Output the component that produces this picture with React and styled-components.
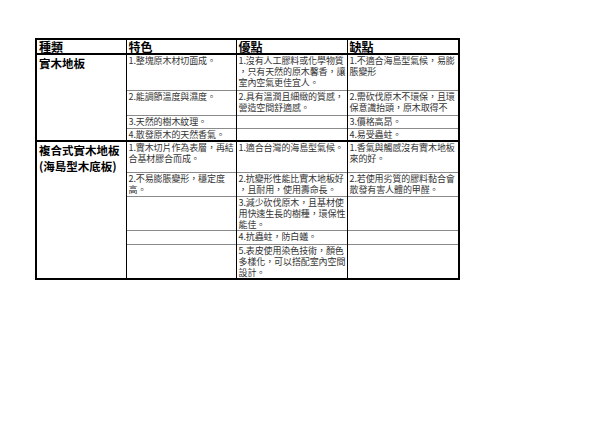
import React from 'react';
import styled, { createGlobalStyle } from 'styled-components';

const GlobalStyle = createGlobalStyle`
  html, body {
    margin: 0;
    padding: 0;
    background: #fff;
  }
`;

const groups = [
  {
    name: '實木地板',
    rows: [
      { h: 36, cells: ['1.整塊原木材切面成。', '1.沒有人工膠料或化學物質\n，只有天然的原木馨香，讓\n室內空氣更佳宜人。', '1.不適合海島型氣候，易膨\n脹變形'] },
      { h: 25, cells: ['2.能調節溫度與濕度。', '2.具有溫潤且細緻的質感，\n營造空間舒適感。', '2.需砍伐原木不環保，且環\n保意識抬頭，原木取得不'] },
      { h: 13, cells: ['3.天然的樹木紋理。', '', '3.價格高昂。'] },
      { h: 13, cells: ['4.散發原木的天然香氣。', '', '4.易受蟲蛀。'] },
    ],
  },
  {
    name: '複合式實木地板\n(海島型木底板)',
    rows: [
      { h: 31, cells: ['1.實木切片作為表層，再結\n合基材膠合而成。', '1.適合台灣的海島型氣候。', '1.香氣與觸感沒有實木地板\n來的好。'] },
      { h: 24, cells: ['2.不易膨脹變形，穩定度\n高。', '2.抗變形性能比實木地板好\n，且耐用，使用壽命長。', '2.若使用劣質的膠料黏合會\n散發有害人體的甲醛。'] },
      { h: 34, cells: ['', '3.減少砍伐原木，且基材使\n用快速生長的樹種，環保性\n能佳。', ''] },
      { h: 14, cells: ['', '4.抗蟲蛀，防白蟻。', ''] },
      { h: 35, cells: ['', '5.表皮使用染色技術，顏色\n多樣化，可以搭配室內空間\n設計。', ''] },
    ],
  },
];

function App() {
  return (
    <Page>
      <GlobalStyle />
      <Sheet>
        <colgroup>
          <col style={{ width: 90 }} />
          <col style={{ width: 110 }} />
          <col style={{ width: 111 }} />
          <col style={{ width: 112 }} />
        </colgroup>
        <thead>
          <tr>
            <HeadCell>種類</HeadCell>
            <HeadCell>特色</HeadCell>
            <HeadCell>優點</HeadCell>
            <HeadCell>缺點</HeadCell>
          </tr>
        </thead>
        {groups.map(g => (
          <Group key={g.name}>
            {g.rows.map((r, i) => (
              <Row key={i} style={{ height: r.h }} $last={i === g.rows.length - 1}>
                {i === 0 && <Label rowSpan={g.rows.length}>{g.name}</Label>}
                {r.cells.map((c, j) => (
                  <Cell key={j}>{c}</Cell>
                ))}
              </Row>
            ))}
          </Group>
        ))}
      </Sheet>
    </Page>
  );
}

const Page = styled.div`
  padding: 38px 0 0 35px;
  width: 600px;
  height: 425px;
  box-sizing: border-box;
  background: #fff;
`;

const Sheet = styled.table`
  border-collapse: collapse;
  table-layout: fixed;
  width: 425px;
  border: 2px solid #000;
  font-family: "Noto Sans CJK TC", "Noto Sans", sans-serif;
  color: #333;
`;

const HeadCell = styled.th`
  height: 13px;
  padding: 0 2px;
  text-align: left;
  vertical-align: middle;
  font-size: 12px;
  font-weight: 700;
  line-height: 13px;
  color: #000;
  border-left: 1.5px solid #000;
  border-bottom: 2px solid #000;
`;

const Group = styled.tbody`
  border-bottom: 2px solid #000;
`;

const Row = styled.tr`
  border-bottom: ${p => (p.$last ? '2px solid #000' : '1px solid #8a8a8a')};
`;

const Label = styled.td`
  padding: 0 2px;
  vertical-align: top;
  white-space: pre;
  font-size: 11.5px;
  font-weight: 700;
  line-height: 16px;
  color: #000;
  border-left: 1.5px solid #000;
  border-bottom: 2px solid #000;
`;

const Cell = styled.td`
  padding: 0 2px;
  vertical-align: top;
  white-space: pre;
  font-size: 9px;
  line-height: 11px;
  letter-spacing: -0.1px;
  border-left: 1.5px solid #000;
`;

export default App;
